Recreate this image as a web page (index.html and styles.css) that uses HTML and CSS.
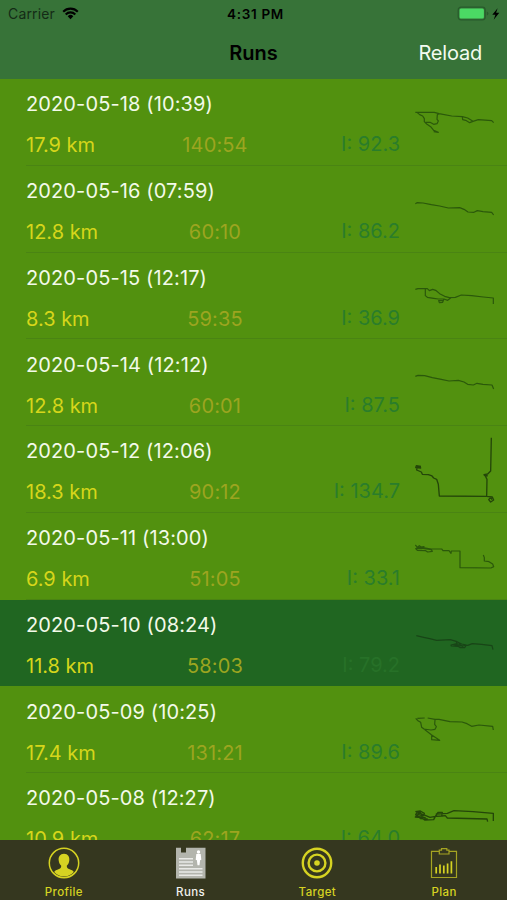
FILE: index.html
```
<!DOCTYPE html>
<html lang="en">
<head>
    <meta charset="UTF-8">
    <meta name="viewport" content="width=device-width, initial-scale=1.0">
    <title>Runs</title>
    <link rel="stylesheet" href="styles.css">
</head>
<body>
    <div class="app">
        <header class="header">
            <div class="status-bar">
                <div class="carrier">
                    <span>Carrier</span>
                    <svg class="wifi" viewBox="0 0 17 13">
                        <path d="M1.2 4.7a10.3 10.3 0 0 1 14.6 0M3.7 7.4a6.8 6.8 0 0 1 9.6 0" fill="none" stroke="#000" stroke-width="2.1"/>
                        <path d="M5.7 9.2a4 4 0 0 1 5.6 0L8.5 12.3z"/>
                    </svg>
                </div>
                <div class="clock">4:31 PM</div>
                <div class="power">
                    <svg viewBox="0 0 46 16">
                        <rect x="1.2" y="1.2" width="27" height="12.6" rx="2.8" fill="none" stroke="#295b2c" stroke-width="1.2"/>
                        <rect x="2.5" y="2.5" width="24.4" height="10" rx="1.5" fill="#4bd964"/>
                        <path d="M29.8 5.5v4q1.6-.7 1.6-2t-1.6-2" fill="#295b2c"/>
                        <path d="M40.6 2.2L35.3 8.8h3.1l-1.7 5 5.6-7h-3.2z"/>
                    </svg>
                </div>
            </div>
            <nav class="nav-bar">
                <h1>Runs</h1>
                <a class="reload">Reload</a>
            </nav>
        </header>

        <main class="runs">
            <article class="run">
                <div class="info">
                    <div class="date">2020-05-18 (10:39)</div>
                    <div class="stats"><span class="distance">17.9 km</span><span class="time">140:54</span><span class="intensity">I: 92.3</span></div>
                </div>
                <svg class="track" viewBox="0 -33 321 260"><path d="M46 67L103 67 117 71 155 78 187 80 203 84 219 94 235 89 275 92 281 98M51 67L59 74 68 78 73 86 73 95 80 102 92 110 101 121 115 127 101 125M77 97L90 97 101 103 111 101 115 93 111 88 112 74 117 71M187 80L188 89 197 91 209 98 219 94"/></svg>
            </article>

            <article class="run">
                <div class="info">
                    <div class="date">2020-05-16 (07:59)</div>
                    <div class="stats"><span class="distance">12.8 km</span><span class="time">60:10</span><span class="intensity">I: 86.2</span></div>
                </div>
                <svg class="track" viewBox="0 227 321 260"><path d="M46 340L51 337 69 338 94 343 119 347 145 353 179 352 192 357 204 365 222 366 232 361 249 364 275 366 281 374"/></svg>
            </article>

            <article class="run">
                <div class="info">
                    <div class="date">2020-05-15 (12:17)</div>
                    <div class="stats"><span class="distance">8.3 km</span><span class="time">59:35</span><span class="intensity">I: 36.9</span></div>
                </div>
                <svg class="track" viewBox="0 -37 321 260"><path d="M46 72L54 70 82 70 88 76 98 72 107 75 119 85 134 93 148 97 166 96 184 89 215 91 250 95 280 98 280 116M76 70L76 91 82 96 101 99 115 101 132 101 143 105 152 98M132 101L128 111 118 112 116 106 129 106"/></svg>
            </article>

            <article class="run">
                <div class="info">
                    <div class="date">2020-05-14 (12:12)</div>
                    <div class="stats"><span class="distance">12.8 km</span><span class="time">60:01</span><span class="intensity">I: 87.5</span></div>
                </div>
                <svg class="track" viewBox="0 223 321 260"><path d="M46 335L54 332 74 333 97 339 124 344 147 349 175 347 192 352 203 359 220 361 231 356 249 359 276 361 281 373"/></svg>
            </article>

            <article class="run">
                <div class="info">
                    <div class="date">2020-05-12 (12:06)</div>
                    <div class="stats"><span class="distance">18.3 km</span><span class="time">90:12</span><span class="intensity">I: 134.7</span></div>
                </div>
                <svg class="track dark" viewBox="0 3 321 260"><path d="M63 124L49 122 47 128 62 129 58 124 51 127 50 135 64 141 67 148 85 149 96 153 101 159 110 163 115 178 118 213 260 214 261 163 256 153 252 149 263 147 272 138 274 38M254 150L263 153M260 214L277 216 281 225 272 231 266 224 272 217 276 224"/></svg>
            </article>

            <article class="run">
                <div class="info">
                    <div class="date">2020-05-11 (13:00)</div>
                    <div class="stats"><span class="distance">6.9 km</span><span class="time">51:05</span><span class="intensity">I: 33.1</span></div>
                </div>
                <svg class="track" viewBox="0 263 321 260"><path d="M46 359L53 367 72 364 66 370 47 370 52 375 77 376 83 380 97 378 94 373 69 369 58 361 48 370 64 366 94 371 125 371 129 376 147 376 153 384 154 377 180 377 180 427 273 428 281 424 278 416 267 409 253 407 253 397 250 389"/></svg>
            </article>

            <article class="run selected">
                <div class="info">
                    <div class="date">2020-05-10 (08:24)</div>
                    <div class="stats"><span class="distance">11.8 km</span><span class="time">58:03</span><span class="intensity">I: 79.2</span></div>
                </div>
                <svg class="track" viewBox="0 -1 321 260"><path d="M49 106L71 111 89 115 110 120 151 118 171 124 185 131 203 135 217 130 245 132 276 136 279 148M169 124L171 130 153 134 154 137 174 138 181 142 194 142 199 134 184 137 162 134 177 131 190 139"/></svg>
            </article>

            <article class="run">
                <div class="info">
                    <div class="date">2020-05-09 (10:25)</div>
                    <div class="stats"><span class="distance">17.4 km</span><span class="time">131:21</span><span class="intensity">I: 89.6</span></div>
                </div>
                <svg class="track" viewBox="0 259 321 260"><path d="M47 356L55 364 62 368 65 383 73 389 94 405 119 422 95 420 95 407M52 356L74 355M83 355L105 359 117 359 150 366 186 367 201 372 215 380 237 376 278 380 280 391M71 388L93 391 105 389 109 381 104 374 105 361"/></svg>
            </article>

            <article class="run">
                <div class="info">
                    <div class="date">2020-05-08 (12:27)</div>
                    <div class="stats"><span class="distance">10.9 km</span><span class="time">62:17</span><span class="intensity">I: 64.0</span></div>
                </div>
                <svg class="track dark" viewBox="441 9 321 260"><path d="M487 125L502 123 514 130 512 137 495 134 487 141 505 143 515 150 542 149 547 139 531 142 513 135 493 126 488 134 503 146 524 147M489 130L508 138 501 126 492 139 518 143M547 139L555 127 568 127 566 138 551 139 550 132 583 130 603 122 660 125 721 130 721 153M567 138L577 137 583 144 702 147 704 155"/></svg>
            </article>
        </main>

        <footer class="tab-bar">
            <a class="tab">
                <svg viewBox="0 0 32 32">
                    <circle cx="16" cy="16" r="14.7" fill="none" stroke="currentColor" stroke-width="1.5"/>
                    <path d="M16 6.7c-4 0-5.7 3-5.3 6.7.3 2.5 1.3 4.2 2.5 5.3 0 1.8-.5 2.5-2.2 3.2-2.5 1-4 1.3-4.8 3.2A13 13 0 0 0 16 29.5a13 13 0 0 0 9.8-4.4c-.8-1.9-2.3-2.2-4.8-3.2-1.7-.7-2.2-1.4-2.2-3.2 1.2-1.1 2.2-2.8 2.5-5.3.4-3.7-1.3-6.7-5.3-6.7z" fill="currentColor"/>
                </svg>
                <span>Profile</span>
            </a>
            <a class="tab active">
                <svg viewBox="0 0 32 32">
                    <path d="M1 .7h5v4.8h5V.7h19.5V31.5H1z" fill="#b3b5ad"/>
                    <path d="M4 11.8h14M4 15h14M4 18.2h14M4 21.7h23.5M4 25h23.5M4 28.2h23.5" stroke="#e9eae7" stroke-width="1.4"/>
                    <circle cx="23.5" cy="5" r="1.7" fill="#fff"/>
                    <path d="M21.3 7h4.4l.6 5.8-1.2.5-.6 5h-2l-.6-5-1.2-.5z" fill="#fff"/>
                </svg>
                <span>Runs</span>
            </a>
            <a class="tab">
                <svg viewBox="0 0 32 32" fill="none" stroke="currentColor" stroke-width="2.4">
                    <circle cx="16" cy="16" r="14.2"/>
                    <circle cx="16" cy="16" r="8.4"/>
                    <circle cx="16" cy="16" r="2.8" fill="currentColor" stroke="none"/>
                </svg>
                <span>Target</span>
            </a>
            <a class="tab">
                <svg viewBox="0 0 32 32" fill="none" stroke="currentColor">
                    <path d="M11 4.3H3.5v26.2h25V4.3H21" stroke="#a5a422" stroke-width="1.2"/>
                    <path d="M11.3 7V3.1h2.2V1.6h5.3v1.5H21V7z" stroke="#a5a422" stroke-width="1.2"/>
                    <path d="M8.2 26.4v-6.3M12 26.4v-9M15.8 26.4v-8M19.6 26.4v-9.8M23.4 26.4V14.3" stroke-width="1.7"/>
                </svg>
                <span>Plan</span>
            </a>
        </footer>
    </div>
</body>
</html>
```
FILE: styles.css
```
* {
    margin: 0;
    padding: 0;
    box-sizing: border-box;
}

body {
    font-family: Inter, "Liberation Sans", sans-serif;
    background-color: #52910f;
    color: #000;
}

.app {
    display: flex;
    flex-direction: column;
    height: 900px;
    overflow: hidden;
}

/* header */
.header {
    flex: none;
    height: 79px;
    background-color: #377338;
}

.status-bar {
    display: grid;
    grid-template-columns: 1fr auto 1fr;
    align-items: center;
    height: 27px;
    padding: 0 4px 0 8px;
    font-size: 14px;
}

.carrier {
    display: flex;
    align-items: center;
    gap: 7px;
    color: #142b16;
    letter-spacing: 0.15px;
}

.wifi {
    width: 17px;
    height: 13px;
}

.clock {
    font-size: 13.5px;
    font-weight: 600;
    letter-spacing: 0.7px;
}

.power {
    display: flex;
    justify-content: flex-end;
}

.power svg {
    width: 46px;
    height: 16px;
}

.nav-bar {
    display: grid;
    grid-template-columns: 1fr auto 1fr;
    align-items: center;
    height: 51px;
    padding: 0 25px;
}

.nav-bar h1 {
    grid-column: 2;
    font-size: 20px;
    font-weight: 600;
}

.reload {
    justify-self: end;
    font-size: 20px;
    letter-spacing: -0.2px;
    color: #f3fbf0;
}

/* list of runs */
.runs {
    flex: 1;
    min-height: 0;
    overflow: hidden;
}

.run {
    display: flex;
    height: 86.75px;
    padding-left: 26px;
    background: linear-gradient(#4a8413, #4a8413) 26px 100% / 100% 1px no-repeat;
}

.run.selected {
    background: #206621;
}

.info {
    width: 374px;
    padding-top: 12.4px;
    font-size: 20px;
    line-height: 26px;
}

.date {
    letter-spacing: 0.12px;
    color: #f3fae9;
}

.stats {
    display: grid;
    grid-template-columns: 124px 130px 120px;
    margin-top: 15px;
}

.distance {
    color: #d6d61b;
}

.time {
    text-align: center;
    letter-spacing: 0.15px;
    color: #9ca520;
}

.intensity {
    margin-top: -1px;
    text-align: right;
    color: #2a7d2b;
}

.track {
    flex: none;
    width: 107px;
    height: 86.67px;
    fill: none;
    stroke: #2b580b;
    stroke-width: 3.6;
    stroke-linejoin: round;
}

.track.dark {
    stroke: #244609;
    stroke-width: 4;
}

.selected .track {
    stroke: #184517;
}

.selected .intensity {
    color: #277128;
}

/* bottom tabs */
.tab-bar {
    display: flex;
    flex: none;
    height: 60px;
    background-color: #35371f;
}

.tab {
    display: flex;
    flex: 1;
    flex-direction: column;
    align-items: center;
    padding: 7px 0 0 1px;
    color: #d6d322;
    font-size: 11.5px;
    font-weight: 500;
    letter-spacing: 0.4px;
    line-height: 14px;
}

.tab svg {
    width: 32px;
    height: 32px;
    margin-bottom: 6px;
}

.tab.active {
    color: #f2f2ee;
}
```
